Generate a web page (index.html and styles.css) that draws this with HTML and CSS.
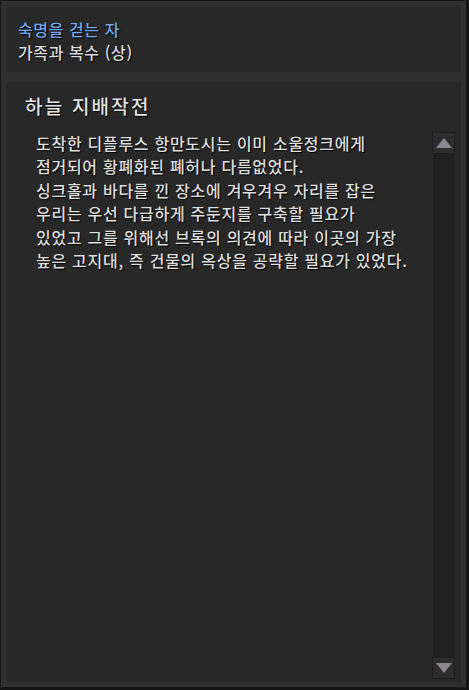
FILE: index.html
```html
<!DOCTYPE html>
<html lang="ko">
<head>
    <meta charset="UTF-8">
    <meta name="viewport" content="width=device-width, initial-scale=1.0">
    <title>하늘 지배작전</title>
    <link rel="stylesheet" href="styles.css">
</head>
<body>
    <div class="window">
        <div class="header">
            <div class="chapter">숙명을 걷는 자</div>
            <div class="subtitle">가족과 복수 (상)</div>
        </div>

        <div class="story">
            <div class="story-body">
                <h1>하늘 지배작전</h1>
                <p>도착한 디플루스 항만도시는 이미 소울정크에게<br>
                점거되어 황폐화된 폐허나 다름없었다.<br>
                싱크홀과 바다를 낀 장소에 겨우겨우 자리를 잡은<br>
                우리는 우선 다급하게 주둔지를 구축할 필요가<br>
                있었고 그를 위해선 브록의 의견에 따라 이곳의 가장<br>
                높은 고지대, 즉 건물의 옥상을 공략할 필요가 있었다.</p>
            </div>
            <div class="scrollbar">
                <div class="arrow up"><span></span></div>
                <div class="track"></div>
                <div class="arrow down"><span></span></div>
            </div>
        </div>
    </div>
</body>
</html>
```

FILE: styles.css
```css
body {
    margin: 0;
    background-color: #151515;
    font-family: "Noto Sans CJK KR", "Noto Sans", sans-serif;
    font-weight: 500;
    color: #dcdcdc;
}
.window {
    box-sizing: border-box;
    width: 465px;
    height: 686px;
    margin: 1px 0 0 1px;
    padding: 6px 5px 5px 6px;
    background-color: #303030;
    display: flex;
    flex-direction: column;
    gap: 10px;
}
.header {
    height: 65px;
    box-sizing: border-box;
    padding: 11px 11px 0;
    background-color: #282828;
    font-size: 16px;
    letter-spacing: 0.6px;
    line-height: 23px;
    text-shadow: 1px 1px 1px #000;
}
.chapter {
    color: #74a7ec;
}
.subtitle {
    color: #dadada;
}
.story {
    flex: 1;
    display: flex;
    background-color: #282828;
}
.story-body {
    flex: 1;
    padding: 11px 0 0 18px;
    text-shadow: 1px 1px 1px #000;
}
h1 {
    margin: 0;
    font-size: 19px;
    font-weight: 500;
    letter-spacing: 2.2px;
    line-height: 26px;
    color: #e2e2e2;
}
p {
    margin: 13px 0 0 11px;
    font-size: 16px;
    letter-spacing: 0.72px;
    line-height: 23.4px;
    color: #dedede;
}
.scrollbar {
    width: 23px;
    margin: 50px 6px 3px 0;
    display: flex;
    flex-direction: column;
}
.track {
    flex: 1;
    margin: 0 1px;
    background-color: #212121;
}
.arrow {
    height: 22px;
    box-sizing: border-box;
    border: 1px solid #1d1d1d;
    background-color: #2d2d2d;
    display: flex;
    justify-content: center;
    align-items: center;
}
.arrow span {
    width: 0;
    height: 0;
    border-left: 8px solid transparent;
    border-right: 8px solid transparent;
}
.up span {
    border-bottom: 10px solid #8b8690;
}
.down span {
    border-top: 10px solid #8b8690;
}
```
